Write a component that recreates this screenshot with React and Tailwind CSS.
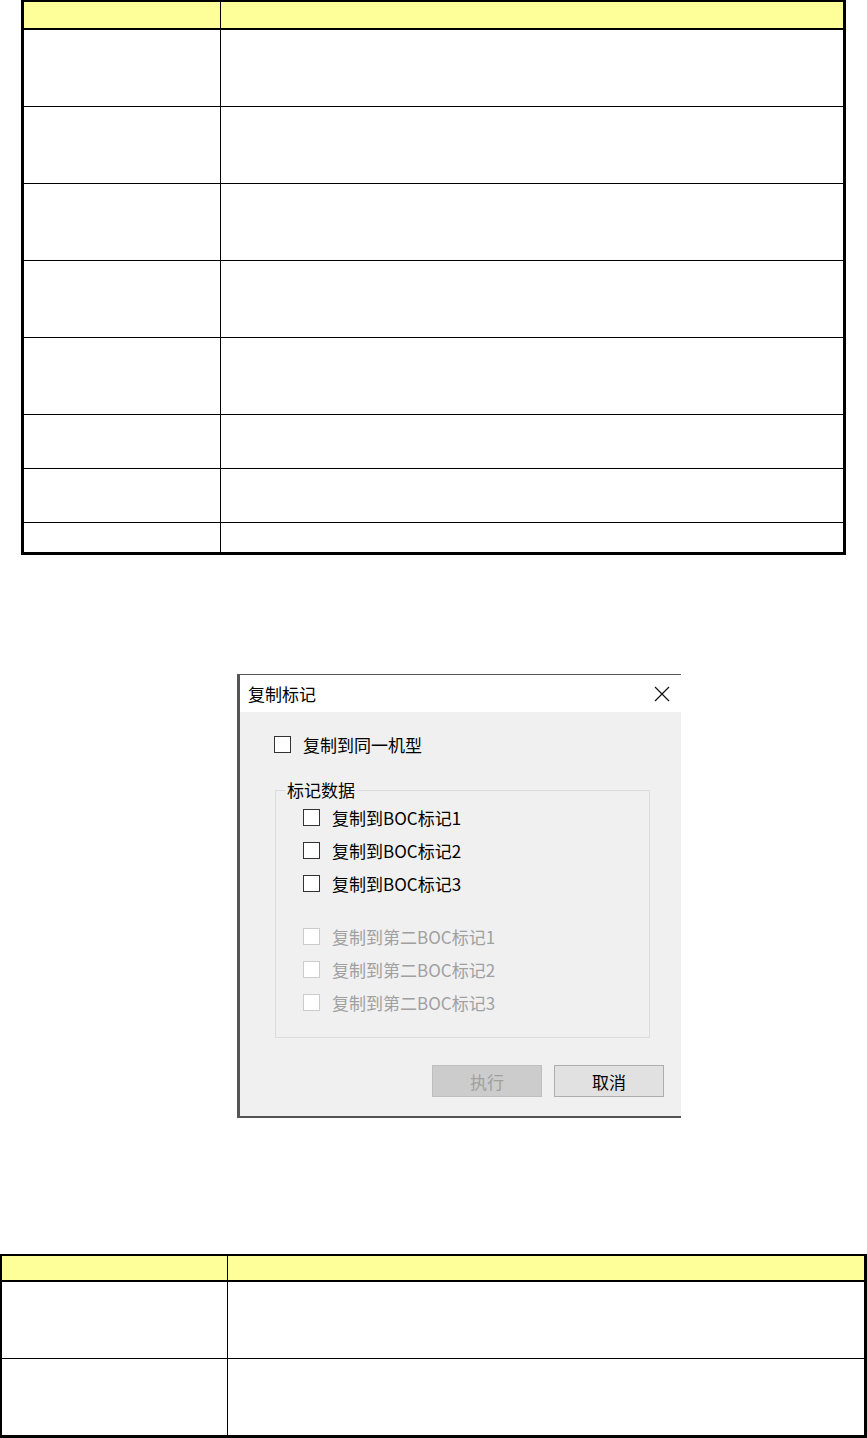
import React from "react";

function Box({ disabled }) {
  return (
    <div
      className={
        disabled
          ? "w-[17px] h-[17px] border border-[#cccccc] bg-white shrink-0"
          : "w-[17px] h-[17px] border border-[#333333] bg-white shrink-0"
      }
    />
  );
}

function Check({ label, disabled }) {
  return (
    <div className="flex items-center h-[17px] gap-[12px]">
      <Box disabled={disabled} />
      <span className={disabled ? "leading-none text-[#a0a0a0]" : "leading-none text-black"}>{label}</span>
    </div>
  );
}

function TopTable() {
  const rows = [77, 77, 77, 77, 77, 54, 54];
  return (
    <div className="ml-[21px] w-[825px] border-l-[3px] border-r-[3px] border-t-2 border-b-[3px] border-black flex flex-col">
      <div className="flex h-[28px] bg-[#ffff99] border-b-2 border-black">
        <div className="w-[197px] border-r border-black" />
        <div className="flex-1" />
      </div>
      {rows.map((h, i) => (
        <div key={i} className={h === 77 ? "flex h-[77px] border-b border-black" : "flex h-[54px] border-b border-black"}>
          <div className="w-[197px] border-r border-black" />
          <div className="flex-1" />
        </div>
      ))}
      <div className="flex h-[29px]">
        <div className="w-[197px] border-r border-black" />
        <div className="flex-1" />
      </div>
    </div>
  );
}

function BottomTable() {
  return (
    <div className="mt-auto w-[867px] border-l-2 border-r-[3px] border-t-2 border-b-[3px] border-black flex flex-col">
      <div className="flex h-[26px] bg-[#ffff99] border-b-2 border-black">
        <div className="w-[226px] border-r border-black" />
        <div className="flex-1" />
      </div>
      <div className="flex h-[77px] border-b border-black">
        <div className="w-[226px] border-r border-black" />
        <div className="flex-1" />
      </div>
      <div className="flex h-[76px]">
        <div className="w-[226px] border-r border-black" />
        <div className="flex-1" />
      </div>
    </div>
  );
}

function Dialog() {
  return (
    <div className="mt-[119px] ml-[237px] w-[444px] h-[444px] border-l-[3px] border-t border-b-2 border-[#555555] bg-[#f0f0f0] flex flex-col font-['Noto_Sans_CJK_SC',sans-serif] text-[17px] text-black">
      <div className="h-[37px] bg-white flex items-center justify-between pl-[8px] pr-[11px]">
        <span className="leading-none">复制标记</span>
        <svg width="16" height="16" viewBox="0 0 16 16" fill="none">
          <path d="M1 1L15 15M15 1L1 15" stroke="#111" strokeWidth="1.2" />
        </svg>
      </div>
      <div className="flex flex-col pt-[24px] pl-[34px]">
        <Check label="复制到同一机型" />
        <div className="relative mt-[37px] ml-[1px] w-[375px] h-[248px] border border-[#dcdcdc] pt-[18px] pl-[27px] flex flex-col">
          <span className="absolute left-[9px] -top-[10px] px-[2px] bg-[#f0f0f0] leading-[17px]">标记数据</span>
          <div className="flex flex-col gap-[16px]">
            <Check label="复制到BOC标记1" />
            <Check label="复制到BOC标记2" />
            <Check label="复制到BOC标记3" />
          </div>
          <div className="flex flex-col gap-[16px] mt-[36px]">
            <Check label="复制到第二BOC标记1" disabled />
            <Check label="复制到第二BOC标记2" disabled />
            <Check label="复制到第二BOC标记3" disabled />
          </div>
        </div>
        <div className="mt-[27px] mr-[17px] flex justify-end gap-[12px]">
          <div className="w-[110px] h-[32px] bg-[#cccccc] border border-[#bfbfbf] text-[#a0a0a0] flex items-center justify-center leading-none">执行</div>
          <div className="w-[110px] h-[32px] bg-[#e1e1e1] border border-[#adadad] text-black flex items-center justify-center leading-none">取消</div>
        </div>
      </div>
    </div>
  );
}

export default function App() {
  return (
    <div className="w-[867px] h-[1438px] bg-white flex flex-col">
      <TopTable />
      <Dialog />
      <BottomTable />
    </div>
  );
}
